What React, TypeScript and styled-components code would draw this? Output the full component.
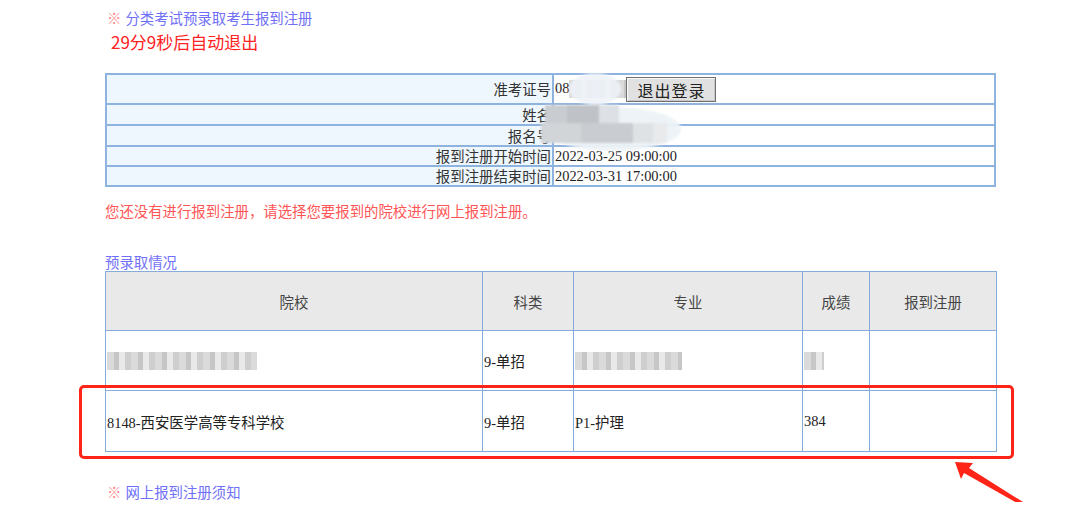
import React from "react";
import styled, { createGlobalStyle } from "styled-components";

const GlobalStyle = createGlobalStyle`
  html, body {
    margin: 0;
    padding: 0;
    background: #ffffff;
  }
  body {
    font-family: "Noto Sans CJK SC", "Noto Sans", sans-serif;
    color: #333;
  }
`;

const Page = styled.div`
  width: 891px;
  padding: 8px 0 0 105px;
`;

const Notice = styled.div<{ $top?: number }>`
  margin: ${(p) => p.$top || 0}px 0 0 2px;
  font-size: 14.4px;
  line-height: 20px;
  color: #6f6ff8;
`;

const Mark = styled.span`
  color: #ff8c8c;
  margin-right: 4px;
`;

const Countdown = styled.div`
  margin: 3px 0 0 6px;
  font-size: 17px;
  line-height: 22px;
  color: #ff2222;
`;

const InfoWrap = styled.div`
  position: relative;
  margin-top: 20px;
`;

const InfoTable = styled.table`
  width: 891px;
  border: 1px solid #8fb3df;
  border-spacing: 0;
  border-collapse: separate;
  table-layout: fixed;
`;

const InfoRow = styled.tr<{ $h: number }>`
  height: ${(p) => p.$h}px;
`;

const Label = styled.td`
  width: 443px;
  border: 1px solid #8fb3df;
  background: #eef6fe;
  text-align: right;
  padding: 0 1px;
  font-size: 14.4px;
  line-height: 16px;
  color: #333;
`;

const Value = styled.td`
  border: 1px solid #8fb3df;
  padding: 0 1px;
  font-family: "Liberation Serif", "Noto Sans CJK SC", serif;
  font-size: 14.4px;
  line-height: 16px;
  color: #222;
  white-space: nowrap;
`;

const LogoutButton = styled.button`
  display: inline-block;
  vertical-align: middle;
  width: 90px;
  height: 25px;
  margin: 0;
  padding: 0;
  border: 1px solid #6f6f6f;
  box-shadow: inset 1px 1px 0 #fafafa, inset -1px -1px 0 #c8c8c8;
  background: #e1e1e1;
  font-family: "Liberation Serif", "Noto Sans CJK SC", serif;
  font-size: 16px;
  color: #222;
  letter-spacing: 1px;
`;

const Mosaic = styled.span<{ $w: number; $h?: number }>`
  display: inline-block;
  vertical-align: middle;
  width: ${(p) => p.$w}px;
  height: ${(p) => p.$h || 18}px;
  background: repeating-linear-gradient(
      90deg,
      #d4d4d4 0 7px,
      #bdbdbd 7px 12px,
      #e6e6e6 12px 18px,
      #c6c6c6 18px 24px
    );
  filter: blur(0.7px);
  opacity: 0.85;
`;

const Cloud = styled.svg`
  position: absolute;
  left: 428px;
  top: -4px;
  pointer-events: none;
`;

const Message = styled.div`
  margin-top: 14px;
  font-size: 14.4px;
  line-height: 20px;
  color: #f55;
`;

const SectionLink = styled.div`
  margin-top: 32px;
  font-size: 14.4px;
  line-height: 18px;
  color: #6f6ff8;
`;

const ResultWrap = styled.div`
  position: relative;
`;

const ResultTable = styled.table`
  width: 891px;
  border-collapse: collapse;
  table-layout: fixed;
  border: 1px solid #86acdc;
`;

const HeadCell = styled.th<{ $w: number }>`
  box-sizing: border-box;
  width: ${(p) => p.$w}px;
  height: 59px;
  padding: 0;
  border: 1px solid #86acdc;
  background: #e9e9e9;
  font-weight: normal;
  font-size: 14.4px;
  color: #444;
  text-align: center;
`;

const BodyRow = styled.tr<{ $h: number }>`
  height: ${(p) => p.$h}px;
`;

const Cell = styled.td`
  border: 1px solid #86acdc;
  padding: 0 1px;
  font-family: "Liberation Serif", "Noto Sans CJK SC", serif;
  font-size: 14.4px;
  color: #222;
  white-space: nowrap;
  overflow: hidden;
`;

const Highlight = styled.div`
  position: absolute;
  left: -26px;
  top: 114px;
  width: 929px;
  height: 68px;
  border: 3px solid #ff2418;
  border-radius: 5px;
  pointer-events: none;
`;

const Arrow = styled.svg`
  position: absolute;
  left: 845px;
  top: 186px;
  pointer-events: none;
`;

const Footer = styled(Notice)``;

const infoRows = [
  { label: "姓名", value: "", h: 21 },
  { label: "报名号", value: "", h: 21 },
  { label: "报到注册开始时间", value: "2022-03-25 09:00:00", h: 20 },
  { label: "报到注册结束时间", value: "2022-03-31 17:00:00", h: 20 },
];

const columns = [
  { title: "院校", w: 377 },
  { title: "科类", w: 91 },
  { title: "专业", w: 229 },
  { title: "成绩", w: 67 },
  { title: "报到注册", w: 127 },
];

export default function App() {
  return (
    <>
      <GlobalStyle />
      <Page>
        <Notice>
          <Mark>※</Mark>分类考试预录取考生报到注册
        </Notice>
        <Countdown>29分9秒后自动退出</Countdown>

        <InfoWrap>
          <InfoTable>
            <tbody>
              <InfoRow $h={30}>
                <Label>准考证号</Label>
                <Value>
                  08<Mosaic $w={57} $h={18} />
                  <LogoutButton>退出登录</LogoutButton>
                </Value>
              </InfoRow>
              {infoRows.map((r) => (
                <InfoRow key={r.label} $h={r.h}>
                  <Label>{r.label}</Label>
                  <Value>{r.value}</Value>
                </InfoRow>
              ))}
            </tbody>
          </InfoTable>
          <Cloud width="160" height="86" viewBox="0 0 160 86">
            <defs>
              <filter id="soft" x="-20%" y="-20%" width="140%" height="140%">
                <feGaussianBlur stdDeviation="1.2" />
              </filter>
            </defs>
            <g filter="url(#soft)">
              <ellipse cx="62" cy="20" rx="26" ry="16" fill="#eef3f8" opacity="0.9" />
              <ellipse cx="80" cy="60" rx="68" ry="22" fill="#edf2f7" opacity="0.95" />
              <rect x="12" y="36" width="22" height="18" fill="#c9cdd1" />
              <rect x="34" y="36" width="32" height="18" fill="#bfc2c6" />
              <rect x="66" y="36" width="20" height="18" fill="#dde1e5" />
              <rect x="8" y="54" width="40" height="20" fill="#d2d5d8" />
              <rect x="48" y="54" width="52" height="20" fill="#c9ccd0" />
              <rect x="100" y="54" width="20" height="20" fill="#dfe2e5" />
              <rect x="120" y="54" width="14" height="20" fill="#e8eaec" />
            </g>
          </Cloud>
        </InfoWrap>

        <Message>您还没有进行报到注册，请选择您要报到的院校进行网上报到注册。</Message>

        <SectionLink>预录取情况</SectionLink>
        <ResultWrap>
          <ResultTable>
            <thead>
              <tr>
                {columns.map((c) => (
                  <HeadCell key={c.title} $w={c.w}>
                    {c.title}
                  </HeadCell>
                ))}
              </tr>
            </thead>
            <tbody>
              <BodyRow $h={60}>
                <Cell>
                  <Mosaic $w={150} />
                </Cell>
                <Cell>9-单招</Cell>
                <Cell>
                  <Mosaic $w={107} />
                </Cell>
                <Cell>
                  <Mosaic $w={20} />
                </Cell>
                <Cell />
              </BodyRow>
              <BodyRow $h={61}>
                <Cell>8148-西安医学高等专科学校</Cell>
                <Cell>9-单招</Cell>
                <Cell>P1-护理</Cell>
                <Cell>384</Cell>
                <Cell />
              </BodyRow>
            </tbody>
          </ResultTable>
          <Highlight />
          <Arrow width="95" height="62" viewBox="0 0 95 62">
            <polygon points="5,5 23,6 19,11 92,57 90,59 14,16 11,22" fill="#ff2418" />
          </Arrow>
        </ResultWrap>

        <Footer $top={30}>
          <Mark>※</Mark>网上报到注册须知
        </Footer>
      </Page>
    </>
  );
}
